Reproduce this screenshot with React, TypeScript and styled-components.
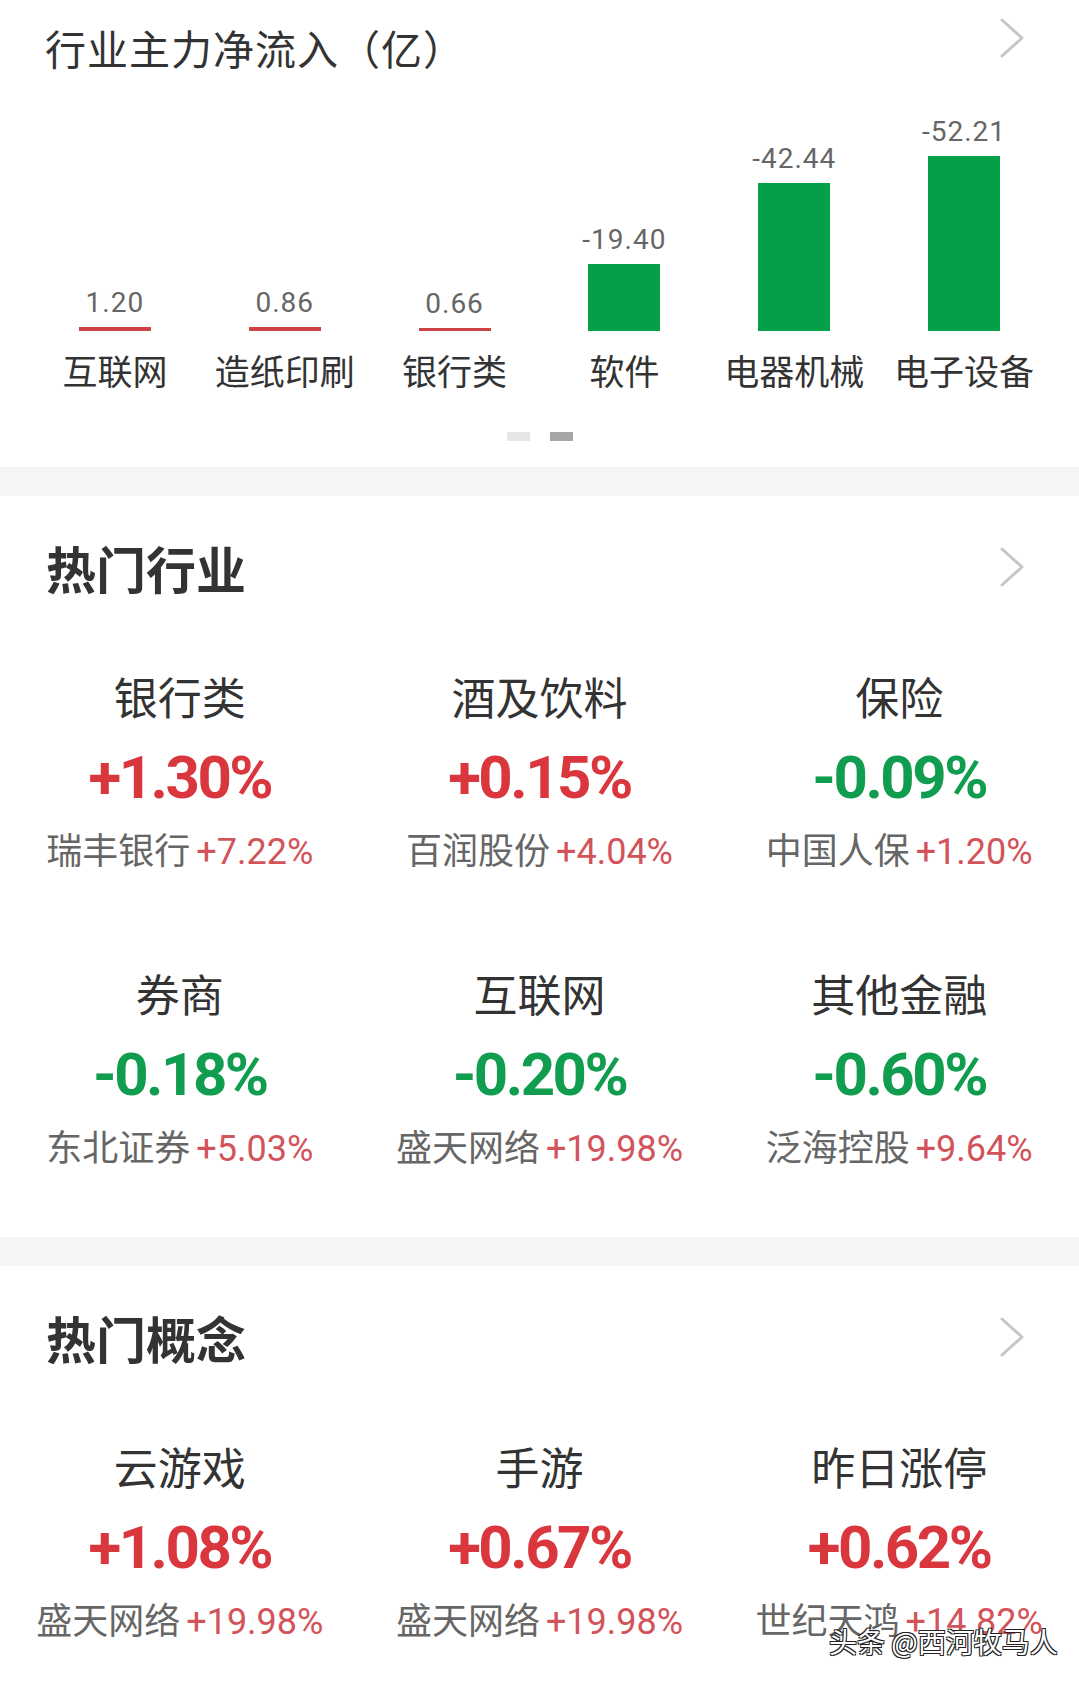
import styled, { createGlobalStyle } from "styled-components";

const GlobalStyle = createGlobalStyle`
  html, body {
    margin: 0;
    padding: 0;
    background: #ffffff;
  }
  body {
    font-family: "Noto Sans CJK SC", "Noto Sans", sans-serif;
  }
`;

type FlowItem = { name: string; value: string; height: number; up: boolean };

const flows: FlowItem[] = [
  { name: "互联网", value: "1.20", height: 4, up: true },
  { name: "造纸印刷", value: "0.86", height: 4, up: true },
  { name: "银行类", value: "0.66", height: 3, up: true },
  { name: "软件", value: "-19.40", height: 67, up: false },
  { name: "电器机械", value: "-42.44", height: 148, up: false },
  { name: "电子设备", value: "-52.21", height: 175, up: false },
];

type Hot = { name: string; change: string; up: boolean; lead: string; leadChange: string };

const industries: Hot[] = [
  { name: "银行类", change: "+1.30%", up: true, lead: "瑞丰银行", leadChange: "+7.22%" },
  { name: "酒及饮料", change: "+0.15%", up: true, lead: "百润股份", leadChange: "+4.04%" },
  { name: "保险", change: "-0.09%", up: false, lead: "中国人保", leadChange: "+1.20%" },
  { name: "券商", change: "-0.18%", up: false, lead: "东北证券", leadChange: "+5.03%" },
  { name: "互联网", change: "-0.20%", up: false, lead: "盛天网络", leadChange: "+19.98%" },
  { name: "其他金融", change: "-0.60%", up: false, lead: "泛海控股", leadChange: "+9.64%" },
];

const concepts: Hot[] = [
  { name: "云游戏", change: "+1.08%", up: true, lead: "盛天网络", leadChange: "+19.98%" },
  { name: "手游", change: "+0.67%", up: true, lead: "盛天网络", leadChange: "+19.98%" },
  { name: "昨日涨停", change: "+0.62%", up: true, lead: "世纪天鸿", leadChange: "+14.82%" },
];

const Chevron = () => (
  <svg width="26" height="40" viewBox="0 0 26 40">
    <polyline
      points="3,2 23,20 3,38"
      fill="none"
      stroke="#c6c6c6"
      strokeWidth="3"
      strokeLinecap="round"
      strokeLinejoin="round"
    />
  </svg>
);

const HotGrid = ({ items }: { items: Hot[] }) => (
  <Grid>
    {items.map((item) => (
      <Cell key={item.name}>
        <CellName>{item.name}</CellName>
        <CellChange up={item.up}>{item.change}</CellChange>
        <Lead>
          {item.lead}
          <LeadChange>{item.leadChange}</LeadChange>
        </Lead>
      </Cell>
    ))}
  </Grid>
);

export default function App() {
  return (
    <Page>
      <GlobalStyle />
      <FlowCard>
        <FlowHeader>
          <FlowTitle>行业主力净流入（亿）</FlowTitle>
          <ChevronBox>
            <Chevron />
          </ChevronBox>
        </FlowHeader>
        <Plot>
          {flows.map((f) => (
            <Column key={f.name}>
              <BarValue>{f.value}</BarValue>
              <Bar up={f.up} style={{ height: f.height }} />
            </Column>
          ))}
        </Plot>
        <Names>
          {flows.map((f) => (
            <Name key={f.name}>{f.name}</Name>
          ))}
        </Names>
        <Dots>
          <Dot />
          <Dot active />
        </Dots>
      </FlowCard>
      <Band />
      <Section>
        <SectionHeader>
          <SectionTitle>热门行业</SectionTitle>
          <Chevron />
        </SectionHeader>
        <HotGrid items={industries} />
      </Section>
      <Band />
      <Section last>
        <SectionHeader>
          <SectionTitle>热门概念</SectionTitle>
          <Chevron />
        </SectionHeader>
        <HotGrid items={concepts} />
      </Section>
      <Watermark>头条 @西河牧马人</Watermark>
    </Page>
  );
}

const Page = styled.div`
  position: relative;
  width: 1079px;
  height: 1681px;
  overflow: hidden;
  background: #fff;
`;

const FlowCard = styled.div`
  height: 467px;
  box-sizing: border-box;
  padding-top: 25px;
`;

const FlowHeader = styled.div`
  display: flex;
  justify-content: space-between;
  align-items: flex-start;
  padding: 0 54px 0 45px;
`;

const FlowTitle = styled.div`
  font-size: 41px;
  line-height: 44px;
  color: #333;
  letter-spacing: 1px;
`;

const ChevronBox = styled.div`
  margin-top: -7px;
`;

const Plot = styled.div`
  display: flex;
  align-items: flex-end;
  height: 262px;
  padding: 0 30px;
`;

const Column = styled.div`
  flex: 1;
  display: flex;
  flex-direction: column;
  align-items: center;
`;

const BarValue = styled.div`
  font-family: "Roboto", "Liberation Sans", sans-serif;
  font-size: 28px;
  line-height: 28px;
  color: #666;
  letter-spacing: 1px;
  margin-bottom: 10px;
`;

const Bar = styled.div<{ up: boolean }>`
  width: 72px;
  background: ${({ up }) => (up ? "#cc4448" : "#04a047")};
`;

const Names = styled.div`
  display: flex;
  padding: 0 30px;
  margin-top: 21px;
`;

const Name = styled.div`
  flex: 1;
  text-align: center;
  font-size: 35px;
  line-height: 35px;
  color: #333;
  white-space: nowrap;
`;

const Dots = styled.div`
  display: flex;
  justify-content: center;
  gap: 20px;
  margin-top: 45px;
`;

const Dot = styled.div<{ active?: boolean }>`
  width: 23px;
  height: 9px;
  background: ${({ active }) => (active ? "#a6a6a6" : "#e6e6e6")};
`;

const Band = styled.div`
  height: 29px;
  background: #f4f5f7;
`;

const Section = styled.div<{ last?: boolean }>`
  padding: 46px 0 ${({ last }) => (last ? "0" : "70px")};
`;

const SectionHeader = styled.div`
  display: flex;
  justify-content: space-between;
  align-items: center;
  padding: 0 54px 0 46px;
  height: 50px;
`;

const SectionTitle = styled.div`
  font-size: 50px;
  line-height: 50px;
  font-weight: 700;
  color: #333;
`;

const Grid = styled.div`
  display: grid;
  grid-template-columns: repeat(3, 1fr);
  row-gap: 101px;
  margin-top: 82px;
`;

const Cell = styled.div`
  display: flex;
  flex-direction: column;
  align-items: center;
`;

const CellName = styled.div`
  font-size: 44px;
  line-height: 44px;
  color: #333;
`;

const CellChange = styled.div<{ up: boolean }>`
  margin-top: 30px;
  font-family: "Roboto", "Liberation Sans", sans-serif;
  font-size: 60px;
  line-height: 60px;
  font-weight: 700;
  letter-spacing: -2.5px;
  color: ${({ up }) => (up ? "#d9363e" : "#109d4f")};
`;

const Lead = styled.div`
  margin-top: 22px;
  font-size: 36px;
  line-height: 36px;
  color: #666;
  white-space: nowrap;
`;

const LeadChange = styled.span`
  margin-left: 6px;
  font-family: "Roboto", "Liberation Sans", sans-serif;
  color: #d2545a;
`;

const Watermark = styled.div`
  position: absolute;
  left: 829px;
  top: 1624px;
  font-size: 28px;
  line-height: 34px;
  color: #fff;
  white-space: nowrap;
  text-shadow: -1px -1px 0 #222, 1px -1px 0 #222, -1px 1px 0 #222,
    1px 1px 0 #222;
`;
